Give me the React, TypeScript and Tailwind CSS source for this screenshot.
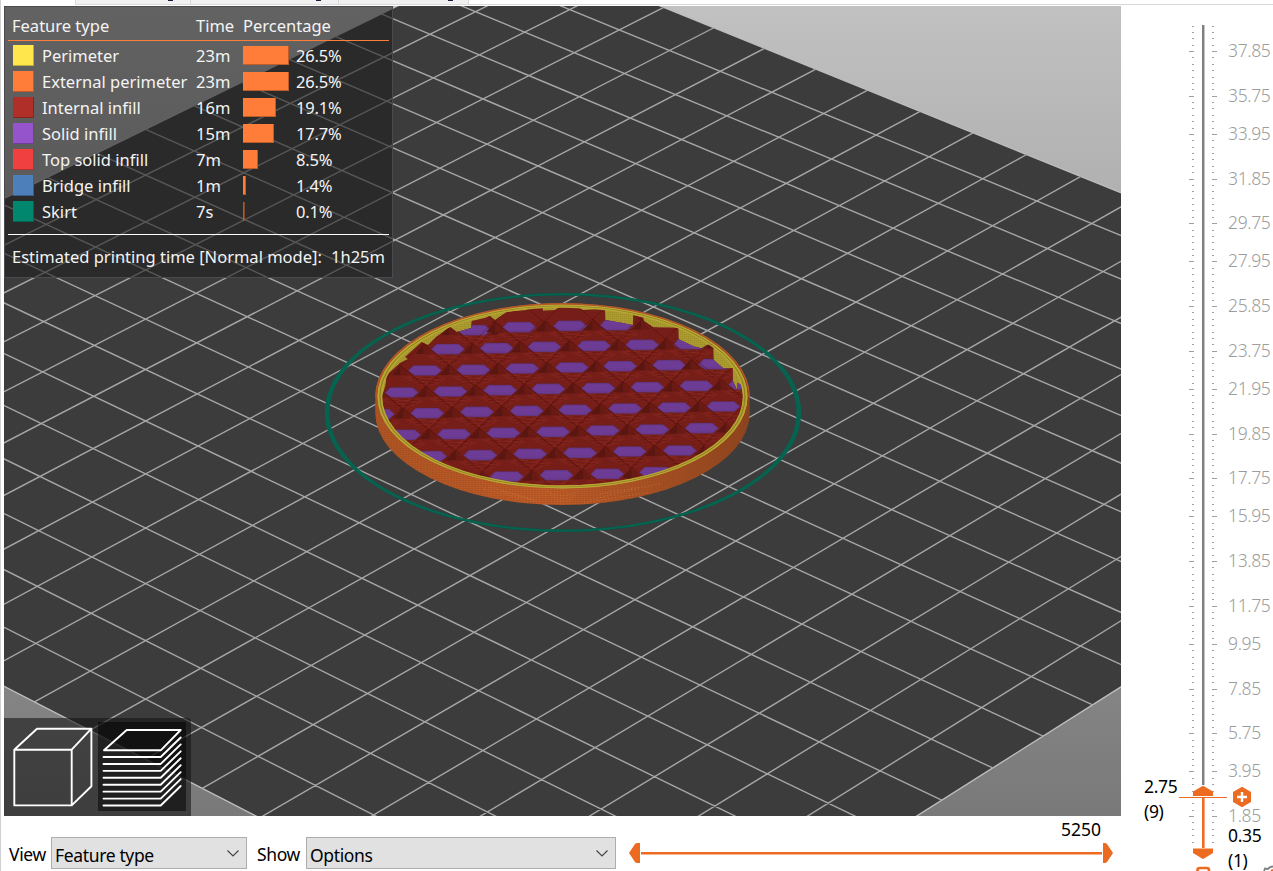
import React from "react";

type Pt = [number, number];

/* ---------- bed projection ---------- */

// Solves the projective map that carries the bed cells in `src` to the screen points in `dst`.
function projection(src: Pt[], dst: Pt[]) {
  const m: number[][] = [];
  src.forEach(([a, b], i) => {
    const [x, y] = dst[i];
    m.push([a, b, 1, 0, 0, 0, -a * x, -b * x, x]);
    m.push([0, 0, 0, a, b, 1, -a * y, -b * y, y]);
  });
  for (let c = 0; c < 8; c++) {
    let p = c;
    for (let r = c + 1; r < 8; r++) if (Math.abs(m[r][c]) > Math.abs(m[p][c])) p = r;
    [m[c], m[p]] = [m[p], m[c]];
    for (let r = 0; r < 8; r++) {
      if (r === c) continue;
      const f = m[r][c] / m[c][c];
      for (let k = c; k < 9; k++) m[r][k] -= f * m[c][k];
    }
  }
  const h = m.map((row, i) => row[8] / row[i]);
  return (a: number, b: number): Pt => {
    const w = h[6] * a + h[7] * b + 1;
    return [(h[0] * a + h[1] * b + h[2]) / w, (h[3] * a + h[4] * b + h[5]) / w];
  };
}

const CELLS = 20;
const corners: Pt[] = [[-481.59, 436.28], [620.24, 1003.53], [1597.15, 385.7], [516.45, -52.29]];
const bed = projection([[0, 0], [CELLS, 0], [CELLS, CELLS], [0, CELLS]], corners);

const seg = (p: Pt, q: Pt) => `M${p[0].toFixed(2)} ${p[1].toFixed(2)}L${q[0].toFixed(2)} ${q[1].toFixed(2)}`;
const gridPath = Array.from({ length: CELLS - 1 }, (_, i) => i + 1)
  .map((i) => seg(bed(i, 0), bed(i, CELLS)) + seg(bed(0, i), bed(CELLS, i)))
  .join("");
const outline = corners.map((p) => p.join(",")).join(" ");

/* ---------- sliced object ---------- */

const hexes: Pt[] = [
  [474, 330], [519.3, 327], [570, 325.7], [616.7, 325],
  [448, 349], [496.7, 348], [544.3, 346.7], [594, 345.7], [642, 344.7], [690, 344],
  [425, 370.3], [473.3, 369.7], [522.3, 368.3], [571.7, 367.3], [620, 366], [669, 365], [715, 364],
  [401.7, 392.3], [450.3, 391.3], [500, 390], [548.3, 388.7], [598.3, 388], [647.3, 387], [696.3, 385.7], [745, 384.5],
  [378, 414], [427.3, 413], [477, 411.7], [526.7, 410.7], [575, 409.7], [625, 408.3], [674, 407.3], [723.3, 406.3],
  [404, 434.7], [454, 434], [503.3, 432.7], [553, 431.7], [602.7, 430.3], [652.3, 429.3], [701.7, 428],
  [430, 456], [480.3, 455], [530, 453.7], [580, 452.7], [629.7, 451.3], [679.7, 450.3],
  [506.7, 476.3], [556.5, 475], [607.3, 473.7], [656, 472],
];

function InfillCell({ at: [x, y] }: { at: Pt }) {
  return (
    <g transform={`translate(${x} ${y})`}>
      <path d="M-23 7L-12 5H13L23 9L12 14L2 17L-10 13Z" fill="#7e221b" />
      <path d="M-14 8h9M-2 7h8M9 8h7M-12 10.500h6M-4 10h9M7 11h8M-8 13h8M3 13h6" stroke="#6b1a15" strokeWidth="0.9" />
      <path d="M-10 7h5M2 8.500h7M-6 11.500h5M8 9.700h6" stroke="#8d2a20" strokeWidth="0.8" />
      <path d="M-24.500-5L2 17L24.500-5L-2-27Z" fill="none" stroke="#56130f" strokeWidth="0.7" strokeDasharray="1.6 0.7" />
      <path d="M-24.500-5L-24.500 5H-33Z" fill="#5a1610" />
      <path d="M-24.500-5L-24.500 5H-16Z" fill="#681a13" />
      <path d="M24.500-5.500L24.500 4.500H16Z" fill="#5a1611" />
      <path d="M24.500-5.500L24.500 4.500H33Z" fill="#6a1b16" />
      <path d="M-16.800 .5L-11.500-4.900H10.800L17 .3L11 5.200H-10.500Z" fill="#6b3b92" stroke="#572c58" strokeWidth="0.5" />
      <path d="M-11-2.500H10M-13-.5H13M-13 1.500H12" stroke="#7440a0" strokeWidth="0.6" />
    </g>
  );
}

const WALL = "M375.300 396.500A187.200 93.200 0 0 1 749.700 396.500V413A187.200 92 0 0 1 375.300 413Z";

function Scene() {
  return (
    <svg className="block h-full w-full" viewBox="4 6 1117 810">
      <defs>
        <linearGradient id="sky" x1="0" y1="0" x2="0" y2="1">
          <stop offset="0" stopColor="#c1c1c1" />
          <stop offset="1" stopColor="#797979" />
        </linearGradient>
        <linearGradient id="wall" x1="0" y1="0" x2="1" y2="0">
          <stop offset="0" stopColor="#ad5424" />
          <stop offset="0.45" stopColor="#bd5b27" />
          <stop offset="0.7" stopColor="#aa5224" />
          <stop offset="1" stopColor="#8c431d" />
        </linearGradient>
        <pattern id="layers" width="3" height="2" patternUnits="userSpaceOnUse">
          <path d="M0 .5H2" stroke="#93451c" strokeWidth="0.7" />
        </pattern>
        <pattern id="weave" width="4" height="3" patternUnits="userSpaceOnUse" patternTransform="rotate(-12)">
          <path d="M0 .5H3M2 2H4" stroke="#6a1914" strokeWidth="0.6" />
        </pattern>
        <pattern id="rib" width="2" height="2" patternUnits="userSpaceOnUse">
          <path d="M.5 0V1" stroke="#837521" strokeWidth="0.7" />
        </pattern>
        <clipPath id="inside">
          <path d="M382 397L385.500 385L386.700 375L400 363L408 359L405 357L421.700 342L428 345L436 337L450 327L457 332L471 328L471.700 321L485 318L490 316L495 320L506.700 312L526.700 310V307.700H542.700L543 310.700L555 310L560 307H576.700L583 310L605 309L605.300 320L617 322L633 325L633.300 315L643.300 317.700L644 321L653.300 327.300L678.300 327.700L678.700 339.300L694 346.500L701.700 348.300L706 345.500L710 344L713.300 347.700L713.700 360L723.300 368.300H732.700L733 381L737 390L737.700 382.700L741 385L743.500 397A180.750 88.600 0 0 1 382 397Z" />
        </clipPath>
      </defs>
      <rect x="4" y="6" width="1117" height="810" fill="url(#sky)" />
      <polygon points={outline} fill="#3c3c3c" stroke="#bdbdbd" strokeWidth="1.4" />
      <path d={gridPath} fill="none" stroke="#a6a6a6" strokeWidth="1.4" />

      {/* skirt */}
      <ellipse cx="563" cy="412.500" rx="235.700" ry="118.200" fill="none" stroke="#0b4f42" strokeWidth="2.600" />
      <path
        fillRule="evenodd"
        fill="#05634f"
        d="M324.800 412.500a238.200 119.300 0 1 0 476.400 0a238.200 119.300 0 1 0 -476.400 0ZM329.500 412.500a233.500 117.200 0 1 0 467 0a233.500 117.200 0 1 0 -467 0Z"
      />

      {/* outer wall */}
      <path d={WALL} fill="url(#wall)" />
      <path d={WALL} fill="url(#layers)" opacity="0.5" />
      <path
        d="M484 489L520 498M490 487L534 500M502 491L540 502M547 491Q562 500 579 491M550 495Q562 502 576 495M554 499Q562 504 572 499M590 500L640 488M600 494L660 484M584 503L650 492"
        stroke="#d07a3c"
        strokeWidth="0.8"
        strokeDasharray="1 2.500"
        fill="none"
      />

      {/* perimeters and infill */}
      <ellipse cx="562.500" cy="396.500" rx="185" ry="91.800" fill="#ab9b2d" />
      <ellipse cx="562.500" cy="396.500" rx="181" ry="89.500" fill="url(#rib)" opacity="0.5" />
      <g clipPath="url(#inside)">
        <rect x="375" y="300" width="375" height="190" fill="#7a1f19" />
        <rect x="375" y="300" width="375" height="190" fill="url(#weave)" />
        {hexes.map((p, i) => (
          <InfillCell key={i} at={p} />
        ))}
      </g>
      <ellipse cx="562.500" cy="396.500" rx="184.300" ry="91.200" fill="none" stroke="#b9a833" strokeWidth="1.400" />
      <path d="M392 430A182.500 90.800 0 0 1 733 430" fill="none" stroke="none" />
      <ellipse cx="562.500" cy="396.500" rx="182.500" ry="90.300" fill="none" stroke="#6f5f1c" strokeWidth="0.700" opacity="0.75" />
      <ellipse cx="562.500" cy="396.500" rx="180.900" ry="89.500" fill="none" stroke="#b9a833" strokeWidth="1.300" />
      <path d="M375.800 396.500A186.700 92.800 0 0 1 749.200 396.500" fill="none" stroke="#b4592a" strokeWidth="1.300" />
    </svg>
  );
}

/* ---------- legend ---------- */

const features = [
  { name: "Perimeter", color: "bg-[#ffe64d]", time: "23m", bar: "w-[46px]", pct: "26.5%" },
  { name: "External perimeter", color: "bg-[#ff7d38]", time: "23m", bar: "w-[46px]", pct: "26.5%" },
  { name: "Internal infill", color: "bg-[#b03029]", time: "16m", bar: "w-[33px]", pct: "19.1%" },
  { name: "Solid infill", color: "bg-[#9654cc]", time: "15m", bar: "w-[31px]", pct: "17.7%" },
  { name: "Top solid infill", color: "bg-[#f04040]", time: "7m", bar: "w-[15px]", pct: "8.5%" },
  { name: "Bridge infill", color: "bg-[#4d80ba]", time: "1m", bar: "w-[3px]", pct: "1.4%" },
  { name: "Skirt", color: "bg-[#00876e]", time: "7s", bar: "w-[2px] opacity-60", pct: "0.1%" },
];

function Legend() {
  return (
    <div className="absolute top-0 left-0 h-[272px] w-[389px] border border-[#4a4a50] bg-[rgba(30,30,30,0.58)] px-[3px] font-['Noto_Sans',sans-serif] text-[16.5px] leading-[26px] text-[#f4f4f4]">
      <div className="flex h-[34px] border-b border-[#ff7d38] pt-[6px] pl-1">
        <span className="w-[184px]">Feature type</span>
        <span className="w-[47px]">Time</span>
        <span>Percentage</span>
      </div>
      <div className="flex flex-col pt-[2px]">
        {features.map((f) => (
          <div key={f.name} className="flex h-[26px] items-center pl-[5px]">
            <span className={`mr-[8px] mb-[2px] h-[21px] w-[21px] border-r border-b border-black/25 ${f.color}`} />
            <span className="w-[154px] whitespace-nowrap">{f.name}</span>
            <span className="w-[47px]">{f.time}</span>
            <span className="mb-[2px] flex w-[53px]">
              <span className={`h-[19px] border-r border-b border-black/25 bg-[#ff7d38] ${f.bar}`} />
            </span>
            <span className="tracking-[-0.2px]">{f.pct}</span>
          </div>
        ))}
      </div>
      <div className="mt-[9px] h-px bg-white" />
      <div className="flex justify-between pt-[9px] pr-1 pl-1 whitespace-nowrap">
        <span>Estimated printing time [Normal mode]:</span>
        <span>1h25m</span>
      </div>
    </div>
  );
}

/* ---------- view buttons ---------- */

const sheets = Array.from({ length: 8 }, (_, i) => 39 + i * 6.93);

function ViewButtons() {
  return (
    <div className="absolute bottom-0 left-0 flex h-[98px] w-[187px] rounded-tr-[4px] bg-[rgba(18,18,18,0.57)] pt-1">
      <svg className="h-[90px] w-[94px]" viewBox="0 4 94 90" fill="none" stroke="#fff" strokeWidth="1.900" strokeLinejoin="round">
        <path d="M10.300 31.700H67.700V87.400H10.300ZM10.300 31.700L33 10.700H87.400L67.700 31.700M87.400 10.700V68.300L67.700 87.400" />
      </svg>
      <div className="h-[89px] w-[88px] bg-black/50">
        <svg className="h-[89px] w-[88px]" viewBox="0 4 88 89" fill="none" stroke="#fff" strokeWidth="1.900" strokeLinejoin="round" strokeLinecap="round">
          <path d="M6 32.300L28.700 12H82.700L62.700 32.300Z" />
          {sheets.map((y) => (
            <path key={y} d={`M5.500 ${y}H62.700L82.700 ${y - 19.5}`} />
          ))}
        </svg>
      </div>
    </div>
  );
}

/* ---------- bottom bar ---------- */

function Select({ value, width }: { value: string; width: string }) {
  return (
    <div className={`flex h-[32px] shrink-0 items-center justify-between border border-[#adadad] bg-[#e1e1e1] pt-[3px] pr-[6px] pl-[3px] ${width}`}>
      <span>{value}</span>
      <svg className="mb-[3px] h-[12px] w-[14px]" viewBox="0 0 14 12" fill="none" stroke="#444" strokeWidth="1.200">
        <path d="M1.500 3.500L7 9L12.500 3.500" />
      </svg>
    </div>
  );
}

function BottomBar() {
  return (
    <div className="flex h-[55px] font-['Noto_Sans','Open_Sans',sans-serif] text-[17.5px] leading-[24px] tracking-[-0.35px] text-black">
      <div className="box-content flex h-[32px] w-[617px] items-center pt-[21px] pl-[8px]">
        <span className="w-[42px] pt-[2px]">View</span>
        <Select value="Feature type" width="w-[196px]" />
        <span className="w-[59px] pt-[2px] pl-[10px]">Show</span>
        <Select value="Options" width="w-[310px]" />
      </div>
      <div className="flex w-[487px] flex-col">
        <span className="h-[27px] self-end pt-px pr-[12px] tracking-normal">5250</span>
        <svg className="h-[22px] w-[487px]" viewBox="626 843 487 22">
          <rect x="641" y="852" width="461" height="2" fill="#ed6b21" />
          <rect x="641" y="854" width="461" height="1" fill="#f6b590" />
          <path d="M629 853L635 844Q636 843 637 843H640V863H637Q636 863 635 862ZM1113 853L1107 844Q1106 843 1105 843H1103V863H1105Q1106 863 1107 862Z" fill="#ed6b21" />
        </svg>
      </div>
    </div>
  );
}

/* ---------- layer slider ---------- */

const labels = [
  37.85, 35.75, 33.95, 31.85, 29.75, 27.95, 25.85, 23.75, 21.95, 19.85, 17.75, 15.95, 13.85, 11.75, 9.95, 7.85, 5.75,
  3.95, 1.85,
];
const PX_PER_MM = 21.25;
const tickY = (v: number) => 51 + (37.85 - v) * PX_PER_MM;
const ticks = Array.from({ length: 129 }, (_, i) => 0.65 + i * 0.3).filter((v) => Math.abs(v - 2.75) > 0.1);
const isMajor = (v: number) => labels.some((l) => Math.abs(l - v) < 0.05);

function LayerSlider() {
  return (
    <div className="flex h-[866px] w-[151px] overflow-hidden font-['Noto_Sans','Open_Sans',sans-serif] text-[17.5px] leading-[20px] font-light tracking-[-0.35px]">
      <div className="w-[57px] pt-[769px] pl-[22px] leading-[25px] font-normal text-black">
        <div>2.75</div>
        <div>(9)</div>
      </div>
      <svg className="h-[866px] w-[49px] shrink-0 overflow-visible" viewBox="1179 5 49 866">
        <g fill="#a0a0a0">
          {ticks.map((v) => {
            const y = Math.round(tickY(v));
            const long = isMajor(v);
            return (
              <g key={v}>
                <rect x={long ? 1189 : 1192} y={y} width={long ? 5 : 2} height="1" />
                <rect x="1212" y={y} width={long ? 5 : 2} height="1" />
              </g>
            );
          })}
        </g>
        <rect x="1202" y="25" width="2" height="760" fill="#808080" />
        <rect x="1204" y="25" width="1" height="760" fill="#c4c4c4" />
        <rect x="1202" y="797" width="2" height="51" fill="#ed6b21" />
        <rect x="1204" y="797" width="1" height="51" fill="#f6a77c" />
        <rect x="1179" y="797" width="48" height="1" fill="#ed6b21" />
        <path d="M1193 796V792L1194 791L1202 786.300Q1203 785.800 1204 786.300L1212 791L1213 792V796Z" fill="#ed6b21" />
        <path d="M1193 848.500V853L1202 858.600Q1203 859.200 1204 858.600L1213 853V848.500Z" fill="#ed6b21" />
        <path d="M1242 786.800L1251 792V802L1242 807.300L1233 802V792Z" fill="#ed6b21" />
        <path d="M1242 792V802M1237 797H1247" stroke="#fff" strokeWidth="2.400" />
        <path d="M1197.500 873V870Q1197.500 868 1200 868H1206.500Q1209 868 1209 870V873" fill="none" stroke="#ed6b21" strokeWidth="2.600" />
        <path d="M1264 871L1265 868.500L1268 869L1270 867L1273 866.500" fill="none" stroke="#808080" strokeWidth="1.800" />
        <path d="M1271 871L1273 870" stroke="#ed6b21" strokeWidth="2" />
      </svg>
      <div className="flex flex-col pt-[35px] text-[#9c9c9c]">
        {labels.map((v, i) => (
          <div
            key={v}
            className="shrink-0"
            style={{ height: i < labels.length - 1 ? (v - labels[i + 1]) * PX_PER_MM : 20 }}
          >
            {v.toFixed(2)}
          </div>
        ))}
        <div className="shrink-0 font-normal text-black">
          <div>0.35</div>
          <div className="mt-[5px]">(1)</div>
        </div>
      </div>
    </div>
  );
}

/* ---------- tab strip ---------- */

function TabStrip() {
  return (
    <div className="flex h-[5px] border-b border-[#d9d9d9]">
      <div className="-mb-px h-[5px] w-[74px] bg-white" />
      <div className="flex w-[115px] justify-end border-l border-[#d9d9d9] bg-[#f0f0f0] pr-[17px]">
        <span className="h-px w-[5px] bg-[#1c1a3a]" />
      </div>
      <div className="flex w-[148px] justify-end border-l border-[#d9d9d9] bg-[#f0f0f0] pr-[17px]">
        <span className="h-px w-[5px] bg-[#1c1a3a]" />
      </div>
      <div className="flex w-[131px] justify-end border-x border-[#d9d9d9] bg-[#f0f0f0] pr-[15px]">
        <span className="h-px w-[5px] bg-[#1c1a3a]" />
      </div>
    </div>
  );
}

export default function App() {
  return (
    <div className="flex h-[871px] w-[1273px] flex-col overflow-hidden border-l border-[#d0d0d0] bg-white">
      <TabStrip />
      <div className="flex">
        <div className="flex w-[1121px] shrink-0 flex-col pt-px">
          <div className="relative ml-[3px] h-[810px] w-[1117px]">
            <Scene />
            <Legend />
            <ViewButtons />
          </div>
          <BottomBar />
        </div>
        <LayerSlider />
      </div>
    </div>
  );
}
